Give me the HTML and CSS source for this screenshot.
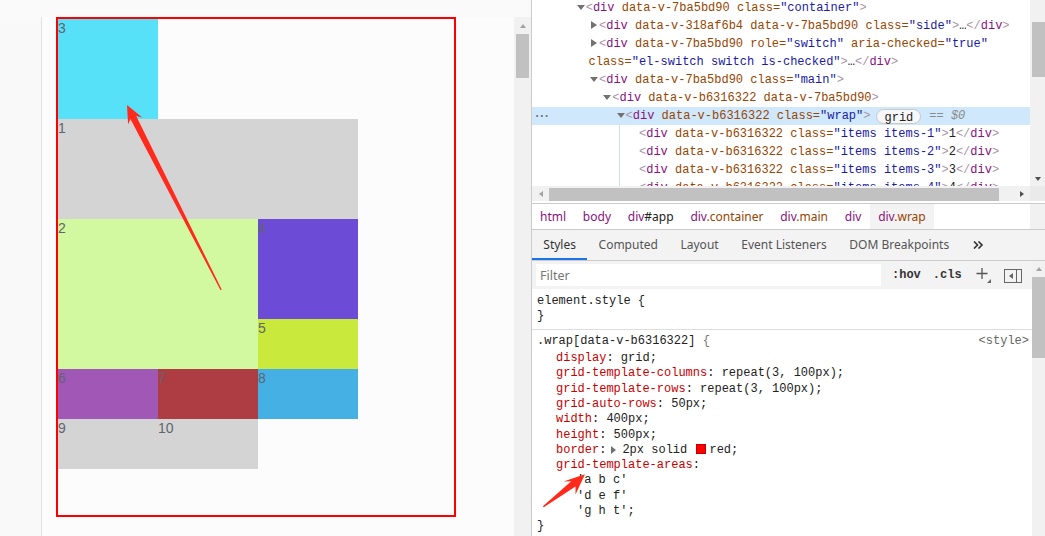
FILE: index.html
```html
<!DOCTYPE html>
<html>
<head>
<meta charset="utf-8">
<link rel="stylesheet" href="styles.css">
</head>
<body>
<div class="screen">
  <div class="viewport">
    <div class="gutter"></div>
    <div class="page">
      <div class="wrap">
        <div class="items items-1">1</div>
        <div class="items items-2">2</div>
        <div class="items items-3">3</div>
        <div class="items items-4">4</div>
        <div class="items items-5">5</div>
        <div class="items items-6">6</div>
        <div class="items items-7">7</div>
        <div class="items items-8">8</div>
        <div class="items items-9">9</div>
        <div class="items items-10">10</div>
      </div>
    </div>
    <div class="pscroll">
      <div class="sarrow"><span class="tri-up light"></span></div>
      <div class="pthumb"></div>
    </div>
  </div>

  <div class="devtools">
    <div class="elements">
      <div class="tree">
        <div class="tree-inner">
          <div class="ln l0"><span class="tw down"></span><span class="t">&lt;</span><span class="tn">div</span> <span class="an">data-v-7ba5bd90</span> <span class="an">class</span><span class="eq">=</span><span class="av">"container"</span><span class="t">&gt;</span></div>
          <div class="ln l1"><span class="tw right"></span><span class="t">&lt;</span><span class="tn">div</span> <span class="an">data-v-318af6b4</span> <span class="an">data-v-7ba5bd90</span> <span class="an">class</span><span class="eq">=</span><span class="av">"side"</span><span class="t">&gt;</span><span class="tx">…</span><span class="t">&lt;/</span><span class="tn">div</span><span class="t">&gt;</span></div>
          <div class="ln l1"><span class="tw right"></span><span class="t">&lt;</span><span class="tn">div</span> <span class="an">data-v-7ba5bd90</span> <span class="an">role</span><span class="eq">=</span><span class="av">"switch"</span> <span class="an">aria-checked</span><span class="eq">=</span><span class="av">"true"</span></div>
          <div class="ln lc"><span class="an">class</span><span class="eq">=</span><span class="av">"el-switch switch is-checked"</span><span class="t">&gt;</span><span class="tx">…</span><span class="t">&lt;/</span><span class="tn">div</span><span class="t">&gt;</span></div>
          <div class="ln l1"><span class="tw down"></span><span class="t">&lt;</span><span class="tn">div</span> <span class="an">data-v-7ba5bd90</span> <span class="an">class</span><span class="eq">=</span><span class="av">"main"</span><span class="t">&gt;</span></div>
          <div class="ln l2"><span class="tw down"></span><span class="t">&lt;</span><span class="tn">div</span> <span class="an">data-v-b6316322</span> <span class="an">data-v-7ba5bd90</span><span class="t">&gt;</span></div>
          <div class="ln sel"><span class="dots">•••</span><span class="tw down"></span><span class="t">&lt;</span><span class="tn">div</span> <span class="an">data-v-b6316322</span> <span class="an">class</span><span class="eq">=</span><span class="av">"wrap"</span><span class="t">&gt;</span><span class="badge">grid</span><span class="dollar">== $0</span></div>
          <div class="children">
            <div class="ln"><span class="t">&lt;</span><span class="tn">div</span> <span class="an">data-v-b6316322</span> <span class="an">class</span><span class="eq">=</span><span class="av">"items items-1"</span><span class="t">&gt;</span><span class="tx">1</span><span class="t">&lt;/</span><span class="tn">div</span><span class="t">&gt;</span></div>
            <div class="ln"><span class="t">&lt;</span><span class="tn">div</span> <span class="an">data-v-b6316322</span> <span class="an">class</span><span class="eq">=</span><span class="av">"items items-2"</span><span class="t">&gt;</span><span class="tx">2</span><span class="t">&lt;/</span><span class="tn">div</span><span class="t">&gt;</span></div>
            <div class="ln"><span class="t">&lt;</span><span class="tn">div</span> <span class="an">data-v-b6316322</span> <span class="an">class</span><span class="eq">=</span><span class="av">"items items-3"</span><span class="t">&gt;</span><span class="tx">3</span><span class="t">&lt;/</span><span class="tn">div</span><span class="t">&gt;</span></div>
            <div class="ln"><span class="t">&lt;</span><span class="tn">div</span> <span class="an">data-v-b6316322</span> <span class="an">class</span><span class="eq">=</span><span class="av">"items items-4"</span><span class="t">&gt;</span><span class="tx">4</span><span class="t">&lt;/</span><span class="tn">div</span><span class="t">&gt;</span></div>
          </div>
        </div>
      </div>
      <div class="vscroll el-v">
        <div class="vthumb el-thumb"></div>
        <div class="vspacer"></div>
        <div class="sarrow small"><span class="tri-down"></span></div>
      </div>
      <div class="hscroll">
        <div class="harrow"><span class="tri-left light"></span></div>
        <div class="hthumb"></div>
        <div class="harrow"><span class="tri-right"></span></div>
      </div>
      <div class="corner"></div>
    </div>

    <div class="crumbs-row">
      <div class="crumbs">
        <span class="crumb"><span class="ctag">html</span></span>
        <span class="crumb"><span class="ctag">body</span></span>
        <span class="crumb"><span class="ctag">div</span><span class="cid">#app</span></span>
        <span class="crumb"><span class="ctag">div</span><span class="ccls">.container</span></span>
        <span class="crumb"><span class="ctag">div</span><span class="ccls">.main</span></span>
        <span class="crumb"><span class="ctag">div</span></span>
        <span class="crumb current"><span class="ctag">div</span><span class="ccls">.wrap</span></span>
      </div>
      <div class="strip"></div>
    </div>

    <div class="tabs">
      <span class="tab active">Styles</span>
      <span class="tab">Computed</span>
      <span class="tab">Layout</span>
      <span class="tab">Event Listeners</span>
      <span class="tab">DOM Breakpoints</span>
      <span class="tab more"><svg width="11" height="8" viewBox="0 0 11 8"><path d="M1 0.5 L4.5 4 L1 7.5 M5.5 0.5 L9 4 L5.5 7.5" fill="none" stroke="#333" stroke-width="1.6"/></svg></span>
    </div>

    <div class="styles-pane">
      <div class="styles-main">
        <div class="toolbar">
          <div class="filter">Filter</div>
          <span class="tbtn">:hov</span>
          <span class="tbtn">.cls</span>
          <svg class="plus" width="16" height="16" viewBox="0 0 16 16"><path d="M6 0 V11 M0.5 5.5 H11.5" stroke="#555" stroke-width="1.3" fill="none"/><path d="M15 11 V15 H11 Z" fill="#666"/></svg>
          <svg class="sidebar" width="18" height="14" viewBox="0 0 18 14"><rect x="0.5" y="0.5" width="17" height="13" fill="none" stroke="#666"/><path d="M12.5 1 V13" stroke="#666"/><path d="M9 4 L5 7 L9 10 Z" fill="#666"/></svg>
        </div>
        <div class="rule first">
          <div class="sl">element.style {</div>
          <div class="cl">}</div>
        </div>
        <div class="rule second">
          <div class="sl sel-line"><span>.wrap[data-v-b6316322] <span class="brace">{</span></span><span class="src">&lt;style&gt;</span></div>
          <div class="pl"><span class="pn">display</span>: grid;</div>
          <div class="pl"><span class="pn">grid-template-columns</span>: repeat(3, 100px);</div>
          <div class="pl"><span class="pn">grid-template-rows</span>: repeat(3, 100px);</div>
          <div class="pl"><span class="pn">grid-auto-rows</span>: 50px;</div>
          <div class="pl"><span class="pn">width</span>: 400px;</div>
          <div class="pl"><span class="pn">height</span>: 500px;</div>
          <div class="pl"><span class="pn">border</span>:<span class="exp"></span>2px solid <span class="swatch"></span>red;</div>
          <div class="pl"><span class="pn">grid-template-areas</span>:</div>
          <div class="vl">'a b c'</div>
          <div class="vl">'d e f'</div>
          <div class="vl">'g h t';</div>
          <div class="cl">}</div>
        </div>
      </div>
      <div class="vscroll st-v">
        <div class="sarrow small"><span class="tri-up light"></span></div>
        <div class="vthumb st-thumb"></div>
      </div>
    </div>
  </div>

  <svg class="annot" width="1045" height="536" viewBox="0 0 1045 536">
    <polygon points="127,105 142.3,117.4 136.2,116 221.7,289.6 220.6,290.3 130.4,118.9 128.1,124.6" fill="#ff2a1c"/>
    <polygon points="585,474.3 575.5,494.5 575.5,486.5 543.8,507.3 542.9,506.2 571.2,481.3 563.5,481.5" fill="#ff2a1c"/>
  </svg>
</div>
</body>
</html>
```

FILE: styles.css
```css
* { box-sizing: border-box; }

body {
  margin: 0;
  width: 1045px;
  height: 536px;
  overflow: hidden;
  background: #fafafa;
}

.screen {
  position: relative;
  display: flex;
  width: 1045px;
  height: 536px;
}

/* ---------- left viewport ---------- */
.viewport {
  width: 531px;
  height: 536px;
  display: flex;
  padding-top: 17px;
  background: #fafafa;
}

.gutter {
  width: 42px;
  border-right: 1px solid #e2e2e2;
  background: #f9f9f9;
}

.page {
  flex: 1;
  padding-left: 14px;
  background: #fcfcfc;
}

.wrap {
  width: 400px;
  height: 500px;
  border: 2px solid #ff0000;
  display: grid;
  grid-template-columns: repeat(3, 100px);
  grid-template-rows: 100px 100px 100px 50px 50px 50px;
  align-content: start;
  font: 14px/16px "Liberation Sans", Arial, sans-serif;
  color: #5f6670;
}

.items { padding-top: 1px; }
.items-1 { grid-area: 2 / 1 / 3 / 4; background: #d4d4d4; }
.items-2 { grid-area: 3 / 1 / 5 / 3; background: #d2f8a0; }
.items-3 { grid-area: 1 / 1 / 2 / 2; background: #56e1f8; }
.items-4 { grid-area: 3 / 3 / 4 / 4; background: #6c4cd7; }
.items-5 { grid-area: 4 / 3 / 5 / 4; background: #c9e93c; }
.items-6 { grid-area: 5 / 1 / 6 / 2; background: #a057b5; }
.items-7 { grid-area: 5 / 2 / 6 / 3; background: #ae3c43; }
.items-8 { grid-area: 5 / 3 / 6 / 4; background: #45b0e4; }
.items-9 { grid-area: 6 / 1 / 7 / 2; background: #d4d4d4; }
.items-10 { grid-area: 6 / 2 / 7 / 3; background: #d4d4d4; }

.pscroll {
  width: 17px;
  background: #f1f1f1;
  display: flex;
  flex-direction: column;
  align-items: center;
}

.sarrow {
  height: 17px;
  width: 100%;
  display: flex;
  align-items: center;
  justify-content: center;
}
.sarrow.small { height: 15px; }

.pthumb {
  width: 13px;
  height: 44px;
  background: #c1c1c1;
}

/* triangles */
.tri-up, .tri-down, .tri-left, .tri-right { display: block; width: 0; height: 0; }
.tri-up { border-left: 3.5px solid transparent; border-right: 3.5px solid transparent; border-bottom: 4px solid #505050; }
.tri-down { border-left: 3.5px solid transparent; border-right: 3.5px solid transparent; border-top: 4px solid #505050; }
.tri-left { border-top: 3.5px solid transparent; border-bottom: 3.5px solid transparent; border-right: 4px solid #505050; }
.tri-right { border-top: 3.5px solid transparent; border-bottom: 3.5px solid transparent; border-left: 4px solid #505050; }
.tri-up.light { border-bottom-color: #a3a3a3; }
.tri-left.light { border-right-color: #a3a3a3; }

/* ---------- devtools ---------- */
.devtools {
  width: 514px;
  height: 536px;
  border-left: 1px solid #cbcbcb;
  background: #ffffff;
  display: flex;
  flex-direction: column;
}

.elements {
  display: grid;
  grid-template-columns: 498px 15px;
  grid-template-rows: 186px 15px;
  height: 204px;
  padding-bottom: 2px;
  border-bottom: 1px solid #cbcbcb;
}

.tree {
  overflow: hidden;
  font: 12px/18px "Liberation Mono", "Courier New", monospace;
  white-space: nowrap;
  color: #222;
}

.tree-inner { margin-top: -0.6px; }

.ln { height: 18px; }
.l0 { padding-left: 53.7px; }
.l1 { padding-left: 67px; }
.l2 { padding-left: 80.3px; }
.lc { padding-left: 56.5px; }
.sel { padding-left: 3px; background: #cfe8fc; }

.dots {
  display: inline-block;
  width: 90.6px;
  font-size: 7px;
  letter-spacing: 0.5px;
  color: #6b6b6b;
  vertical-align: top;
  line-height: 18px;
}

.children {
  margin-left: 87px;
  padding-left: 19px;
  border-left: 1px solid #d3dde8;
}

.t { color: #a894a6; }
.tn { color: #881280; }
.an { color: #994500; }
.eq { color: #994500; }
.av { color: #1a1aa6; }
.tx { color: #222; }

.tw {
  display: inline-block;
  width: 0;
  height: 0;
  vertical-align: middle;
}
.tw.down {
  border-left: 4px solid transparent;
  border-right: 4px solid transparent;
  border-top: 5px solid #727272;
  margin: -2px 1px 0 -9px;
}
.tw.right {
  border-top: 4px solid transparent;
  border-bottom: 4px solid transparent;
  border-left: 6px solid #727272;
  margin: -2px 2px 0 -8px;
}

.badge {
  display: inline-block;
  margin-left: 6px;
  padding: 0 7px;
  height: 15px;
  line-height: 17px;
  border: 1px solid #c8c8c8;
  border-radius: 8px;
  background: #f5f7f9;
  color: #222;
  vertical-align: -2px;
}

.dollar {
  margin-left: 8px;
  color: #8a8a8a;
  font-style: italic;
}

.vscroll {
  background: #f1f1f1;
  display: flex;
  flex-direction: column;
  align-items: flex-end;
}

.el-v { padding-top: 22px; }
.vthumb { width: 13px; background: #c1c1c1; }
.el-thumb { height: 55px; }
.vspacer { flex: 1; }

.hscroll {
  background: #f1f1f1;
  display: flex;
  align-items: flex-end;
}
.harrow {
  width: 17px;
  height: 15px;
  display: flex;
  align-items: center;
  justify-content: center;
}
.hthumb {
  height: 13px;
  width: 450px;
  background: #c1c1c1;
}
.hscroll .harrow:last-child { margin-left: auto; }

.corner { background: #eaeaea; }

/* breadcrumbs */
.crumbs-row {
  display: flex;
  height: 26px;
  border-bottom: 1px solid #cbcbcb;
}

.crumbs {
  flex: 1;
  display: flex;
  font: 12px/26px "Noto Sans", "Open Sans", sans-serif;
}

.crumb { padding: 0 8.4px; }
.crumb:first-child { padding-left: 8px; }
.crumb.current { background: #f3f3f3; }
.ctag { color: #881280; }
.ccls { color: #994500; }
.cid { color: #222; }

.strip { width: 15px; background: #f1f1f1; }

/* tabs */
.tabs {
  display: flex;
  height: 31px;
  background: #f3f3f3;
  border-bottom: 1px solid #cbcbcb;
  font: 12px/29px "Noto Sans", "Open Sans", sans-serif;
  color: #555;
}

.tab {
  padding: 0 11.3px;
  border-bottom: 2px solid transparent;
}
.tab.active {
  color: #333;
  border-bottom-color: #1a73e8;
}
.tab.more {
  display: flex;
  align-items: center;
  padding: 2px 0 0 13px;
}

/* styles pane */
.styles-pane {
  flex: 1;
  display: flex;
}

.styles-main { flex: 1; }

.toolbar {
  height: 28px;
  background: #f3f3f3;
  display: flex;
  align-items: center;
  padding-left: 4px;
}

.filter {
  width: 345px;
  height: 22px;
  background: #fff;
  padding-left: 4px;
  font: 12.5px/23px "Noto Sans", "Open Sans", sans-serif;
  color: #757575;
}

.tbtn {
  padding: 0 6px;
  font: 12px/18px "Liberation Mono", monospace;
  color: #333;
  font-weight: bold;
}
.tbtn:first-of-type { margin-left: 5px; }

.plus { margin-left: 8px; margin-top: 2px; }
.sidebar { margin-left: 12px; margin-top: 2px; }

.rule {
  font: 12px/15.3px "Liberation Mono", "Courier New", monospace;
  color: #222;
  padding: 4.5px 3px 4.9px 5px;
  border-bottom: 1px solid #dddddd;
}
.rule.second { padding-top: 4.5px; }

.sel-line {
  display: flex;
  justify-content: space-between;
  margin-bottom: 1.3px;
}
.brace { color: #777; }
.src { color: #666; }

.pl { padding-left: 19px; }
.vl { padding-left: 40px; }
.pn { color: #c80000; }

.exp {
  display: inline-block;
  width: 0;
  height: 0;
  border-top: 4px solid transparent;
  border-bottom: 4px solid transparent;
  border-left: 5px solid #727272;
  margin: 0 6px 0 5px;
  vertical-align: -1px;
}

.swatch {
  display: inline-block;
  width: 10px;
  height: 10px;
  background: #ff0000;
  border: 1px solid rgba(0,0,0,0.25);
  margin: 0 3px 0 2px;
  vertical-align: -1px;
}

.st-v { padding-top: 0; }
.st-thumb { height: 81px; margin-top: 1px; }

.annot {
  position: absolute;
  left: 0;
  top: 0;
  pointer-events: none;
}
```
